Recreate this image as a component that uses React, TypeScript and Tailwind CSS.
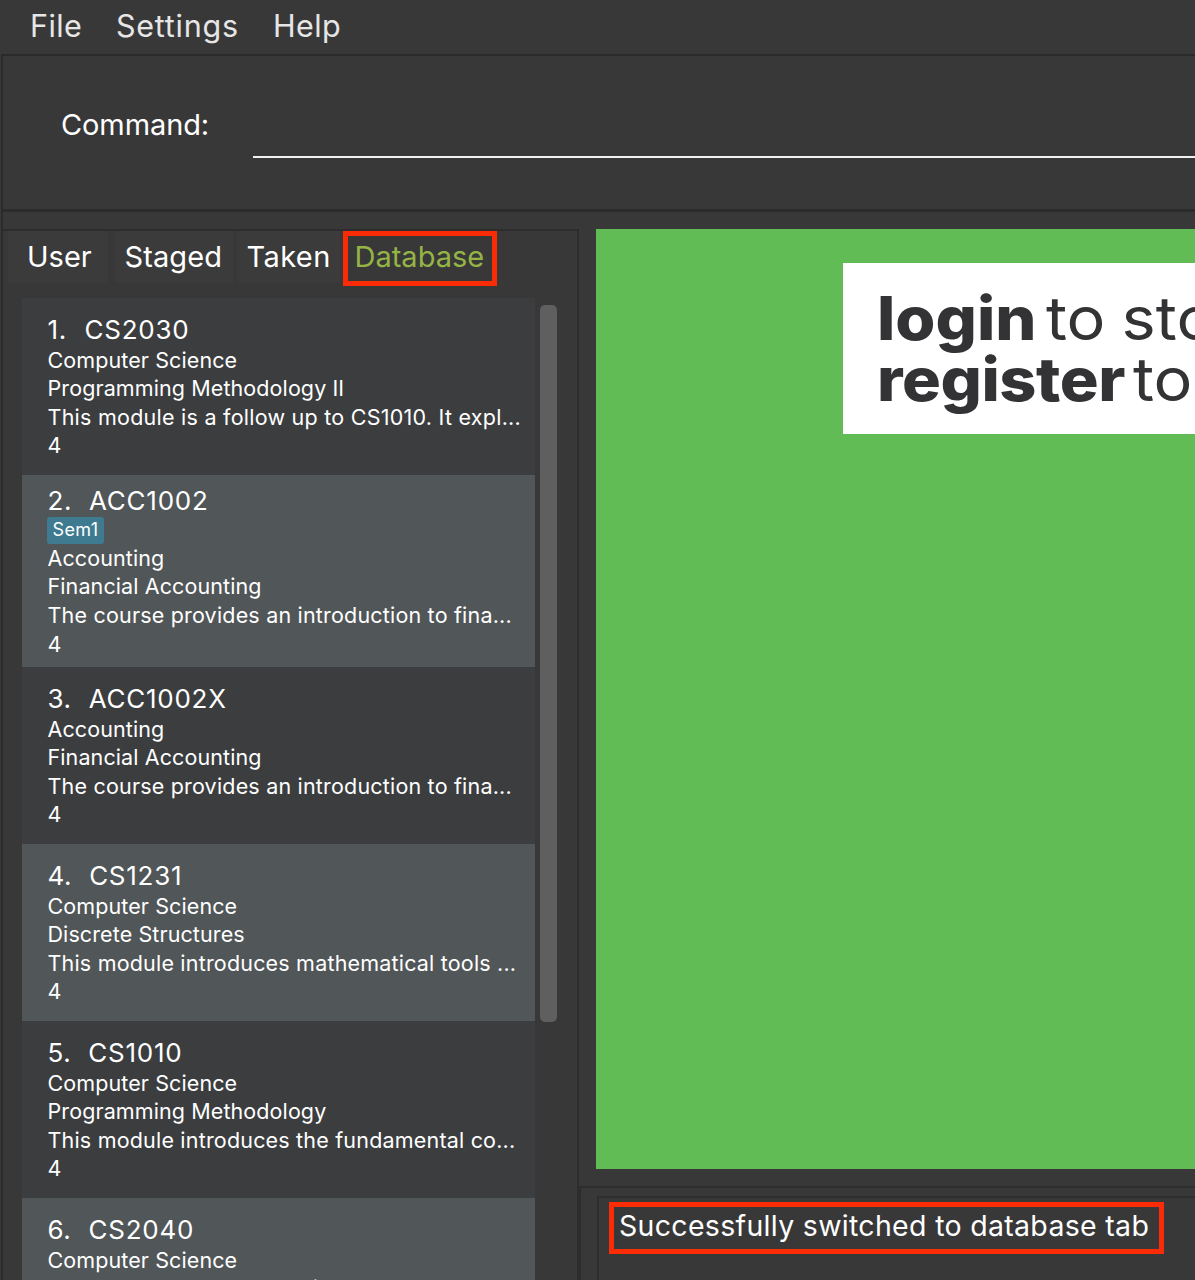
type Module = {
  code: string;
  tag?: string;
  faculty: string;
  title: string;
  description: string;
  credits: number;
};

const modules: Module[] = [
  { code: 'CS2030', faculty: 'Computer Science', title: 'Programming Methodology II', description: 'This module is a follow up to CS1010. It expl...', credits: 4 },
  { code: 'ACC1002', tag: 'Sem1', faculty: 'Accounting', title: 'Financial Accounting', description: 'The course provides an introduction to fina...', credits: 4 },
  { code: 'ACC1002X', faculty: 'Accounting', title: 'Financial Accounting', description: 'The course provides an introduction to fina...', credits: 4 },
  { code: 'CS1231', faculty: 'Computer Science', title: 'Discrete Structures', description: 'This module introduces mathematical tools ...', credits: 4 },
  { code: 'CS1010', faculty: 'Computer Science', title: 'Programming Methodology', description: 'This module introduces the fundamental co...', credits: 4 },
  { code: 'CS2040', faculty: 'Computer Science', title: 'Data Structures and Algorithms', description: 'This module introduces students to the ...', credits: 4 },
];

function ModuleCard({ module, index }: { module: Module; index: number }) {
  const shade = index % 2 === 0 ? 'bg-[#3c3d3f]' : 'bg-[#515658]';
  const size = module.tag ? 'h-[192px] pt-[10px]' : 'h-[177px] pt-4';
  return (
    <li className={`${shade} ${size} shrink-0 overflow-hidden whitespace-nowrap pl-[25.5px] text-[21.5px] leading-[28.6px] tracking-[0.1px]`}>
      <div className="flex h-[31.6px] text-[26px] leading-[31.2px]">
        <span className="mr-[17px] min-w-[20px] tracking-[0.6px]">{index + 1}.</span>
        <span className="tracking-[0.75px]">{module.code}</span>
      </div>
      {module.tag && (
        <div className="flex h-[27.3px] items-start">
          <span className="-ml-[0.5px] flex h-[27px] w-[57px] items-center justify-center rounded-[3px] bg-[#3e7b91] pt-px text-[18px] tracking-[0.4px]">
            {module.tag}
          </span>
        </div>
      )}
      <div>{module.faculty}</div>
      <div>{module.title}</div>
      <div className={index === 0 ? 'tracking-[0.25px]' : 'tracking-[0.19px]'}>{module.description}</div>
      <div>{module.credits}</div>
    </li>
  );
}

export default function App() {
  return (
    <div className="flex h-[1280px] w-[1195px] flex-col overflow-hidden whitespace-nowrap bg-[#383838] font-['Inter',sans-serif] text-white">
      <nav className="flex h-[54px] shrink-0 items-center pb-0.5 pl-[30px] text-[30.5px] text-[#e6e6e6]">
        <span className="w-[86px] tracking-[0.4px]">File</span>
        <span className="w-[157px] tracking-[0.75px]">Settings</span>
        <span className="tracking-[0.4px]">Help</span>
      </nav>

      <div className="ml-px flex min-h-0 grow flex-col border-l-2 border-t-2 border-[#2b2b2b]">
        <section className="flex h-[156px] shrink-0 border-b-3 border-[#2b2b2b]">
          <label className="w-[250px] pl-[58px] pt-[51px] text-[29px] leading-9 tracking-[-0.1px]">Command:</label>
          <div className="mt-[99px] h-[3px] grow border-b-2 border-[#f0f0f0]" />
        </section>

        <div className="flex min-h-0 grow pt-[17px]">
          <aside className="flex w-[576px] shrink-0 flex-col border-r-2 border-t-2 border-[#2d2d2d]">
            <div className="flex h-[67px] shrink-0 text-[29px] leading-[51px]">
              <span className="ml-[5px] h-[51px] w-[100px] bg-[#3b3b3b] pl-[19px]">User</span>
              <span className="ml-[7px] h-[51px] w-[118px] bg-[#3b3b3b] pl-[9.5px] tracking-[0.1px]">Staged</span>
              <span className="ml-[4px] h-[51px] w-[103px] bg-[#3b3b3b] pl-[9.5px] tracking-[0.4px]">Taken</span>
              <span className="ml-[3px] h-[55px] w-[154px] border-[5px] border-[#fb2c05] pl-[6.5px] leading-[41px] text-[#95b445]">
                Database
              </span>
            </div>
            <div className="flex min-h-0 grow pl-[19px]">
              <ul className="flex w-[513px] flex-col overflow-hidden">
                {modules.map((module, index) => (
                  <ModuleCard key={module.code} module={module} index={index} />
                ))}
              </ul>
              <div className="ml-[5px] mt-[7px] h-[717px] w-[17px] rounded-[5px] bg-[#5f5f5f]" />
            </div>
          </aside>

          <main className="flex min-w-0 grow flex-col">
            <div className="ml-[17px] h-[940px] shrink-0 overflow-hidden bg-[#61bc55] pl-[247px] pt-[34px]">
              <div className="h-[171px] w-[400px] bg-white pl-[34px] pt-[25px] text-[60px] leading-[61px] text-[#333335]">
                <div className="flex origin-left scale-x-[1.08]">
                  <span className="w-[156.5px] font-extrabold">login</span>
                  <span className="w-[70px]">to</span>
                  <span>sto</span>
                </div>
                <div className="flex origin-left scale-x-[1.08]">
                  <span className="w-[237px] font-extrabold tracking-[-0.4px]">register</span>
                  <span>to</span>
                </div>
              </div>
            </div>
            <div className="mt-[17px] flex grow flex-col border-l-2 border-t-2 border-[#2d2d2d] pl-[16px] pt-[8px]">
              <div className="grow border-l-2 border-t-2 border-[#2d2d2d] pl-[10px] pt-[4px]">
                <p className="h-[52px] w-[555px] border-[5px] border-[#fb2c05] pl-[5px] text-[28.5px] leading-[38px] tracking-[0.31px]">
                  Successfully switched to database tab
                </p>
              </div>
            </div>
          </main>
        </div>
      </div>
    </div>
  );
}
